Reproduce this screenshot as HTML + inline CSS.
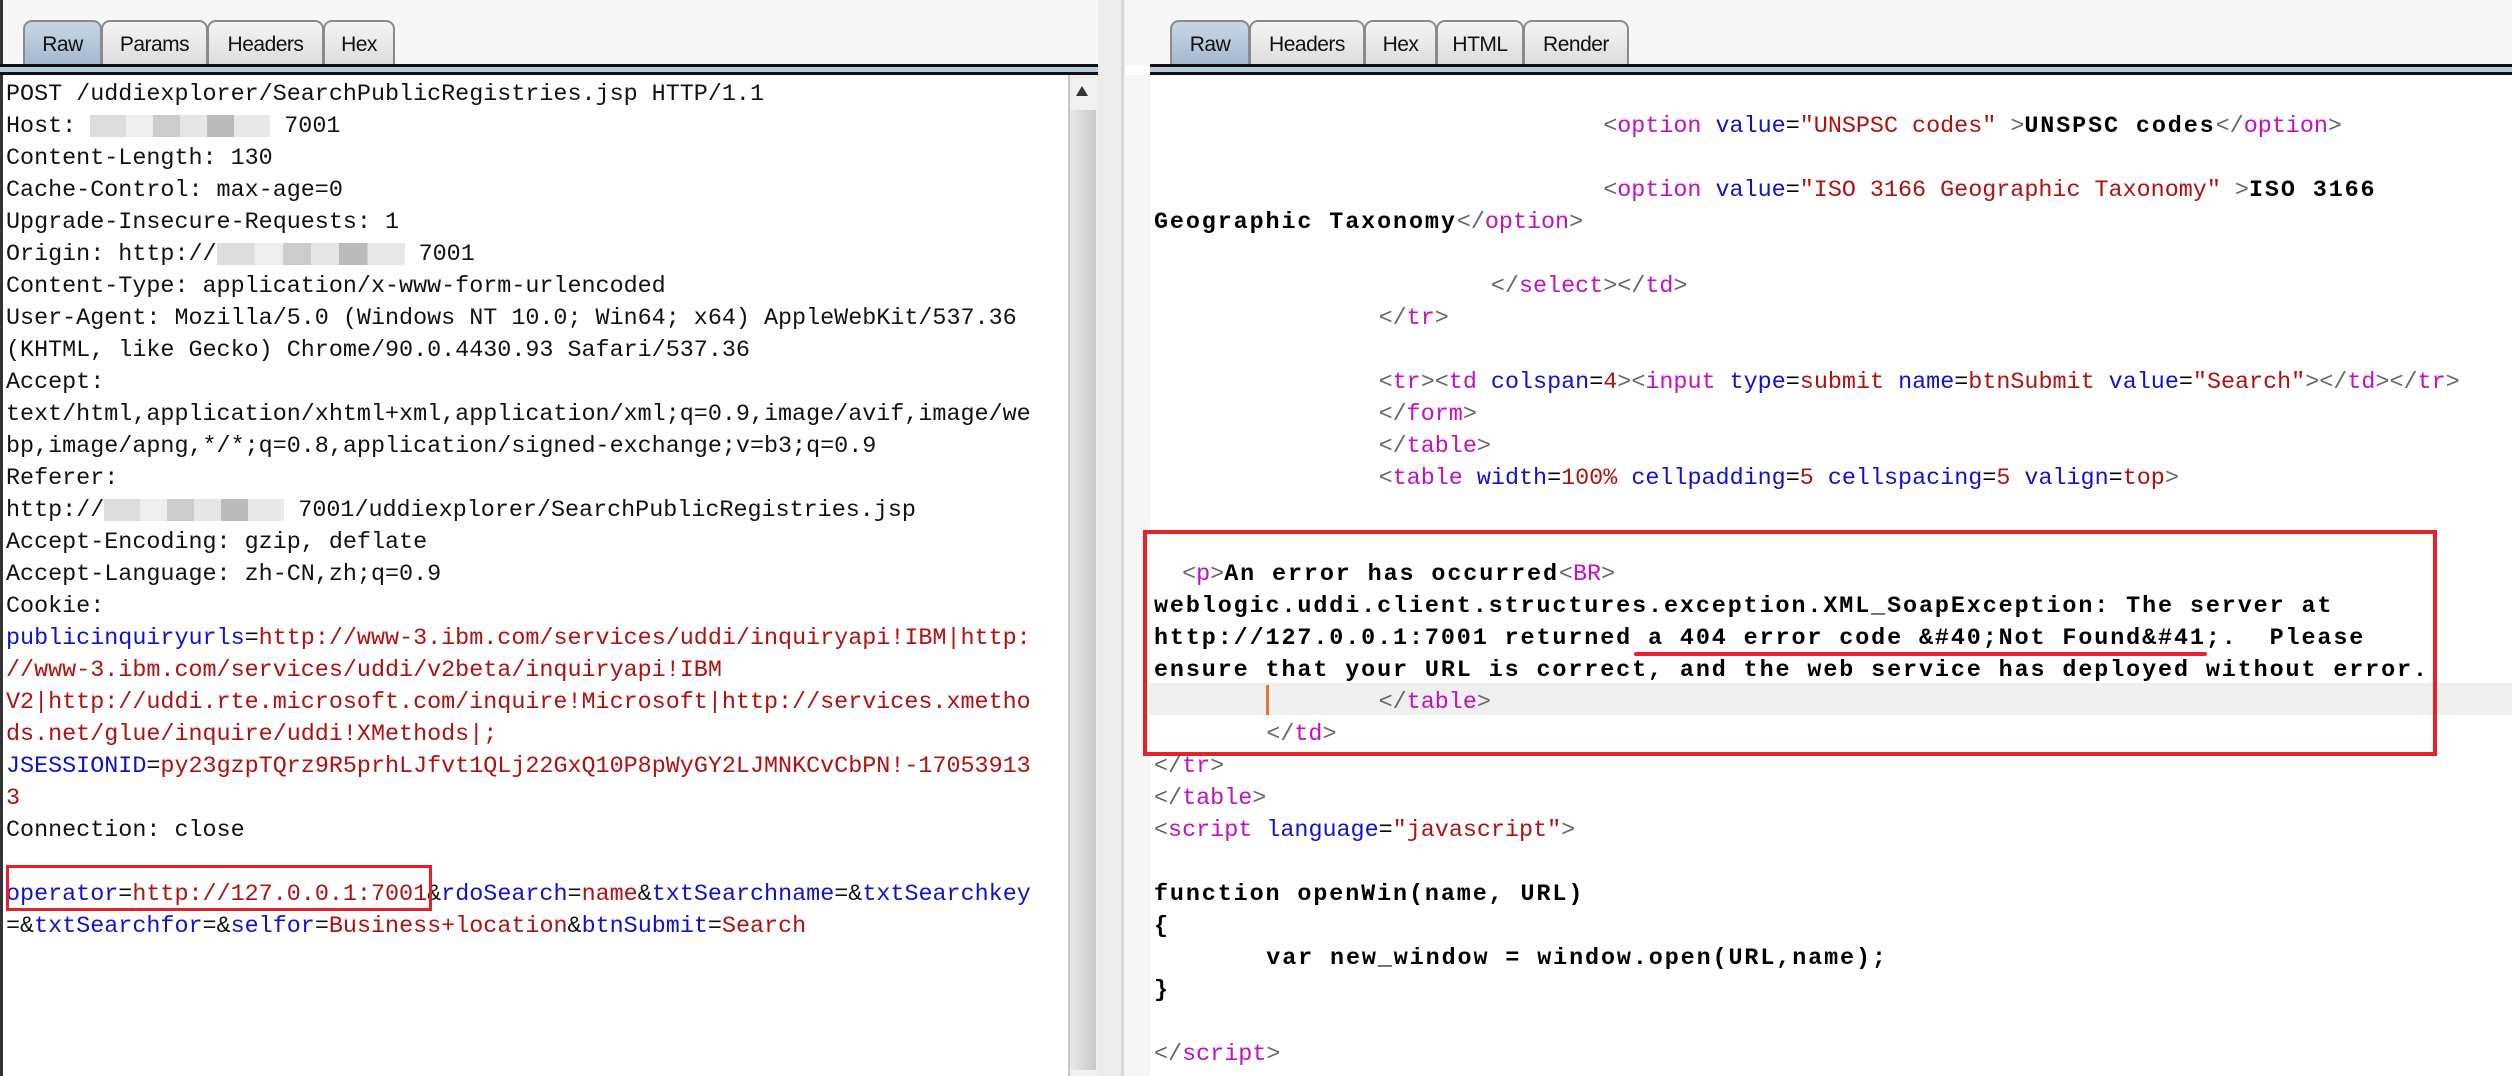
<!DOCTYPE html>
<html><head><meta charset="utf-8">
<style>
*{margin:0;padding:0;box-sizing:border-box}
body{width:2512px;height:1076px;background:#fff;position:relative;overflow:hidden;font-family:"Liberation Mono","Noto Sans CJK SC",monospace;}
.top{position:absolute;top:0;height:66px;background:#f7f7f7}
.tab{position:absolute;top:20px;height:46px;border:2px solid #8a8a8a;border-bottom:none;border-radius:9px 9px 0 0;background:linear-gradient(#f4f4f4,#dcdcdc);font-family:"Liberation Sans",sans-serif;font-size:21px;color:#111;text-align:center;line-height:46px;letter-spacing:-0.5px}
.tab.sel{background:linear-gradient(#c9d7e4,#9fb6cc);height:48px}
.band{position:absolute;top:64px;height:11px;background:#b8cbdd;border-top:3px solid #111;border-bottom:3px solid #111}
.ln{position:absolute;height:32px;line-height:32px;font-size:23.4px;white-space:pre;color:#111}
.R .ln{font-weight:bold;letter-spacing:1.9px;color:#000}
.R .ln span,.R .i{font-weight:normal;letter-spacing:0}
.b{color:#1010d0}.r{color:#b01010}.p{color:#c010c0}.g{color:#666}
.blur{display:inline-block;height:22px;vertical-align:middle;background:linear-gradient(90deg,#ddd 0,#ddd 20%,#eee 20%,#eee 35%,#ccc 35%,#ccc 50%,#e6e6e6 50%,#e6e6e6 65%,#bbb 65%,#bbb 80%,#e8e8e8 80%)}
</style></head><body>
<div class="top" style="left:0;width:1100px"></div>
<div class="top" style="left:1125px;width:1387px"></div>
<div style="position:absolute;left:0;top:0;width:3px;height:1076px;background:#333"></div>
<div class="tab sel" style="left:23px;width:79px">Raw</div>
<div class="tab" style="left:101px;width:107px">Params</div>
<div class="tab" style="left:207px;width:117px">Headers</div>
<div class="tab" style="left:323px;width:72px">Hex</div>
<div class="band" style="left:0;width:1100px"></div>
<div style="position:absolute;left:1068px;top:75px;width:30px;height:1001px;background:#f0f0f0;border-left:2px solid #c8c8c8"></div>
<div style="position:absolute;left:1076px;top:86px;width:0;height:0;border-left:6px solid transparent;border-right:6px solid transparent;border-bottom:10px solid #333"></div>
<div style="position:absolute;left:1070px;top:110px;width:26px;height:960px;background:linear-gradient(90deg,#e8e8e8,#c9c9c9)"></div>
<div style="position:absolute;left:1098px;top:0;width:27px;height:1076px;background:#ececec"></div>
<div style="position:absolute;left:1121px;top:0;width:3px;height:1076px;background:#d4d7de"></div>
<div style="position:absolute;left:1124px;top:75px;width:26px;height:1001px;background:#f6f6f6"></div>
<div class="tab sel" style="left:1170px;width:80px">Raw</div>
<div class="tab" style="left:1249px;width:116px">Headers</div>
<div class="tab" style="left:1364px;width:73px">Hex</div>
<div class="tab" style="left:1436px;width:88px">HTML</div>
<div class="tab" style="left:1523px;width:106px">Render</div>
<div class="band" style="left:1150px;width:1362px"></div>

<div class="ln" style="left:6px;top:79px">POST /uddiexplorer/SearchPublicRegistries.jsp HTTP/1.1</div>
<div class="ln" style="left:6px;top:111px">Host: <span class="blur" style="width:180px"></span> 7001</div>
<div class="ln" style="left:6px;top:143px">Content-Length: 130</div>
<div class="ln" style="left:6px;top:175px">Cache-Control: max-age=0</div>
<div class="ln" style="left:6px;top:207px">Upgrade-Insecure-Requests: 1</div>
<div class="ln" style="left:6px;top:239px">Origin: http://<span class="blur" style="width:188px"></span> 7001</div>
<div class="ln" style="left:6px;top:271px">Content-Type: application/x-www-form-urlencoded</div>
<div class="ln" style="left:6px;top:303px">User-Agent: Mozilla/5.0 (Windows NT 10.0; Win64; x64) AppleWebKit/537.36</div>
<div class="ln" style="left:6px;top:335px">(KHTML, like Gecko) Chrome/90.0.4430.93 Safari/537.36</div>
<div class="ln" style="left:6px;top:367px">Accept:</div>
<div class="ln" style="left:6px;top:399px">text/html,application/xhtml+xml,application/xml;q=0.9,image/avif,image/we</div>
<div class="ln" style="left:6px;top:431px">bp,image/apng,*/*;q=0.8,application/signed-exchange;v=b3;q=0.9</div>
<div class="ln" style="left:6px;top:463px">Referer:</div>
<div class="ln" style="left:6px;top:495px">http://<span class="blur" style="width:180px"></span> 7001/uddiexplorer/SearchPublicRegistries.jsp</div>
<div class="ln" style="left:6px;top:527px">Accept-Encoding: gzip, deflate</div>
<div class="ln" style="left:6px;top:559px">Accept-Language: zh-CN,zh;q=0.9</div>
<div class="ln" style="left:6px;top:591px">Cookie:</div>
<div class="ln" style="left:6px;top:623px"><span class="b">publicinquiryurls</span>=<span class="r">http://www-3.ibm.com/services/uddi/inquiryapi!IBM|http:</span></div>
<div class="ln r" style="left:6px;top:655px">//www-3.ibm.com/services/uddi/v2beta/inquiryapi!IBM</div>
<div class="ln r" style="left:6px;top:687px">V2|http://uddi.rte.microsoft.com/inquire!Microsoft|http://services.xmetho</div>
<div class="ln r" style="left:6px;top:719px">ds.net/glue/inquire/uddi!XMethods|;</div>
<div class="ln" style="left:6px;top:751px"><span class="b">JSESSIONID</span>=<span class="r">py23gzpTQrz9R5prhLJfvt1QLj22GxQ10P8pWyGY2LJMNKCvCbPN!-17053913</span></div>
<div class="ln r" style="left:6px;top:783px">3</div>
<div class="ln" style="left:6px;top:815px">Connection: close</div>
<div class="ln" style="left:6px;top:879px"><span class="b">operator</span>=<span class="r">http://127.0.0.1:7001</span>&amp;<span class="b">rdoSearch</span>=<span class="r">name</span>&amp;<span class="b">txtSearchname</span>=&amp;<span class="b">txtSearchkey</span></div>
<div class="ln" style="left:6px;top:911px">=&amp;<span class="b">txtSearchfor</span>=&amp;<span class="b">selfor</span>=<span class="r">Business+location</span>&amp;<span class="b">btnSubmit</span>=<span class="r">Search</span></div>
<div style="position:absolute;left:6px;top:865px;width:426px;height:46px;border:3px solid #e8202a"></div>

<div style="position:absolute;left:1150px;top:683px;width:1362px;height:32px;background:#efefef"></div>
<div style="position:absolute;left:1266px;top:685px;width:3px;height:30px;background:#f07030"></div>
<div class="R">
<div class="ln" style="left:1154px;top:111px"><span class="i">                                </span><span class="g">&lt;</span><span class="p">option</span><span> </span><span class="b">value</span><span>=</span><span class="r">"UNSPSC codes"</span><span> </span><span class="g">&gt;</span>UNSPSC codes<span class="g">&lt;/</span><span class="p">option</span><span class="g">&gt;</span></div>
<div class="ln" style="left:1154px;top:175px"><span class="i">                                </span><span class="g">&lt;</span><span class="p">option</span><span> </span><span class="b">value</span><span>=</span><span class="r">"ISO 3166 Geographic Taxonomy"</span><span> </span><span class="g">&gt;</span>ISO 3166</div>
<div class="ln" style="left:1154px;top:207px">Geographic Taxonomy<span class="g">&lt;/</span><span class="p">option</span><span class="g">&gt;</span></div>
<div class="ln" style="left:1154px;top:271px"><span class="i">                        </span><span class="g">&lt;/</span><span class="p">select</span><span class="g">&gt;&lt;/</span><span class="p">td</span><span class="g">&gt;</span></div>
<div class="ln" style="left:1154px;top:303px"><span class="i">                </span><span class="g">&lt;/</span><span class="p">tr</span><span class="g">&gt;</span></div>
<div class="ln" style="left:1154px;top:367px"><span class="i">                </span><span class="g">&lt;</span><span class="p">tr</span><span class="g">&gt;&lt;</span><span class="p">td</span><span> </span><span class="b">colspan</span><span>=</span><span class="r">4</span><span class="g">&gt;&lt;</span><span class="p">input</span><span> </span><span class="b">type</span><span>=</span><span class="r">submit</span><span> </span><span class="b">name</span><span>=</span><span class="r">btnSubmit</span><span> </span><span class="b">value</span><span>=</span><span class="r">"Search"</span><span class="g">&gt;&lt;/</span><span class="p">td</span><span class="g">&gt;&lt;/</span><span class="p">tr</span><span class="g">&gt;</span></div>
<div class="ln" style="left:1154px;top:399px"><span class="i">                </span><span class="g">&lt;/</span><span class="p">form</span><span class="g">&gt;</span></div>
<div class="ln" style="left:1154px;top:431px"><span class="i">                </span><span class="g">&lt;/</span><span class="p">table</span><span class="g">&gt;</span></div>
<div class="ln" style="left:1154px;top:463px"><span class="i">                </span><span class="g">&lt;</span><span class="p">table</span><span> </span><span class="b">width</span><span>=</span><span class="r">100%</span><span> </span><span class="b">cellpadding</span><span>=</span><span class="r">5</span><span> </span><span class="b">cellspacing</span><span>=</span><span class="r">5</span><span> </span><span class="b">valign</span><span>=</span><span class="r">top</span><span class="g">&gt;</span></div>
<div class="ln" style="left:1154px;top:559px"><span class="i">  </span><span class="g">&lt;</span><span class="p">p</span><span class="g">&gt;</span>An error has occurred<span class="g">&lt;</span><span class="p">BR</span><span class="g">&gt;</span></div>
<div class="ln" style="left:1154px;top:591px">weblogic.uddi.client.structures.exception.XML_SoapException: The server at</div>
<div class="ln" style="left:1154px;top:623px">http://127.0.0.1:7001 returned a 404 error code &amp;#40;Not Found&amp;#41;.  Please</div>
<div class="ln" style="left:1154px;top:655px">ensure that your URL is correct, and the web service has deployed without error.</div>
<div class="ln" style="left:1154px;top:687px"><span class="i">                </span><span class="g">&lt;/</span><span class="p">table</span><span class="g">&gt;</span></div>
<div class="ln" style="left:1154px;top:719px"><span class="i">        </span><span class="g">&lt;/</span><span class="p">td</span><span class="g">&gt;</span></div>
<div class="ln" style="left:1154px;top:751px"><span class="g">&lt;/</span><span class="p">tr</span><span class="g">&gt;</span></div>
<div class="ln" style="left:1154px;top:783px"><span class="g">&lt;/</span><span class="p">table</span><span class="g">&gt;</span></div>
<div class="ln" style="left:1154px;top:815px"><span class="g">&lt;</span><span class="p">script</span><span> </span><span class="b">language</span><span>=</span><span class="r">"javascript"</span><span class="g">&gt;</span></div>
<div class="ln" style="left:1154px;top:879px">function openWin(name, URL)</div>
<div class="ln" style="left:1154px;top:911px">{</div>
<div class="ln" style="left:1154px;top:943px"><span class="i">        </span>var new_window = window.open(URL,name);</div>
<div class="ln" style="left:1154px;top:975px">}</div>
<div class="ln" style="left:1154px;top:1039px"><span class="g">&lt;/</span><span class="p">script</span><span class="g">&gt;</span></div>
</div>
<div style="position:absolute;left:1143px;top:530px;width:1294px;height:226px;border:4px solid #e8202a"></div>
<div style="position:absolute;left:1634px;top:652px;width:573px;height:4px;background:#e8202a;border-radius:2px"></div>
</body></html>
